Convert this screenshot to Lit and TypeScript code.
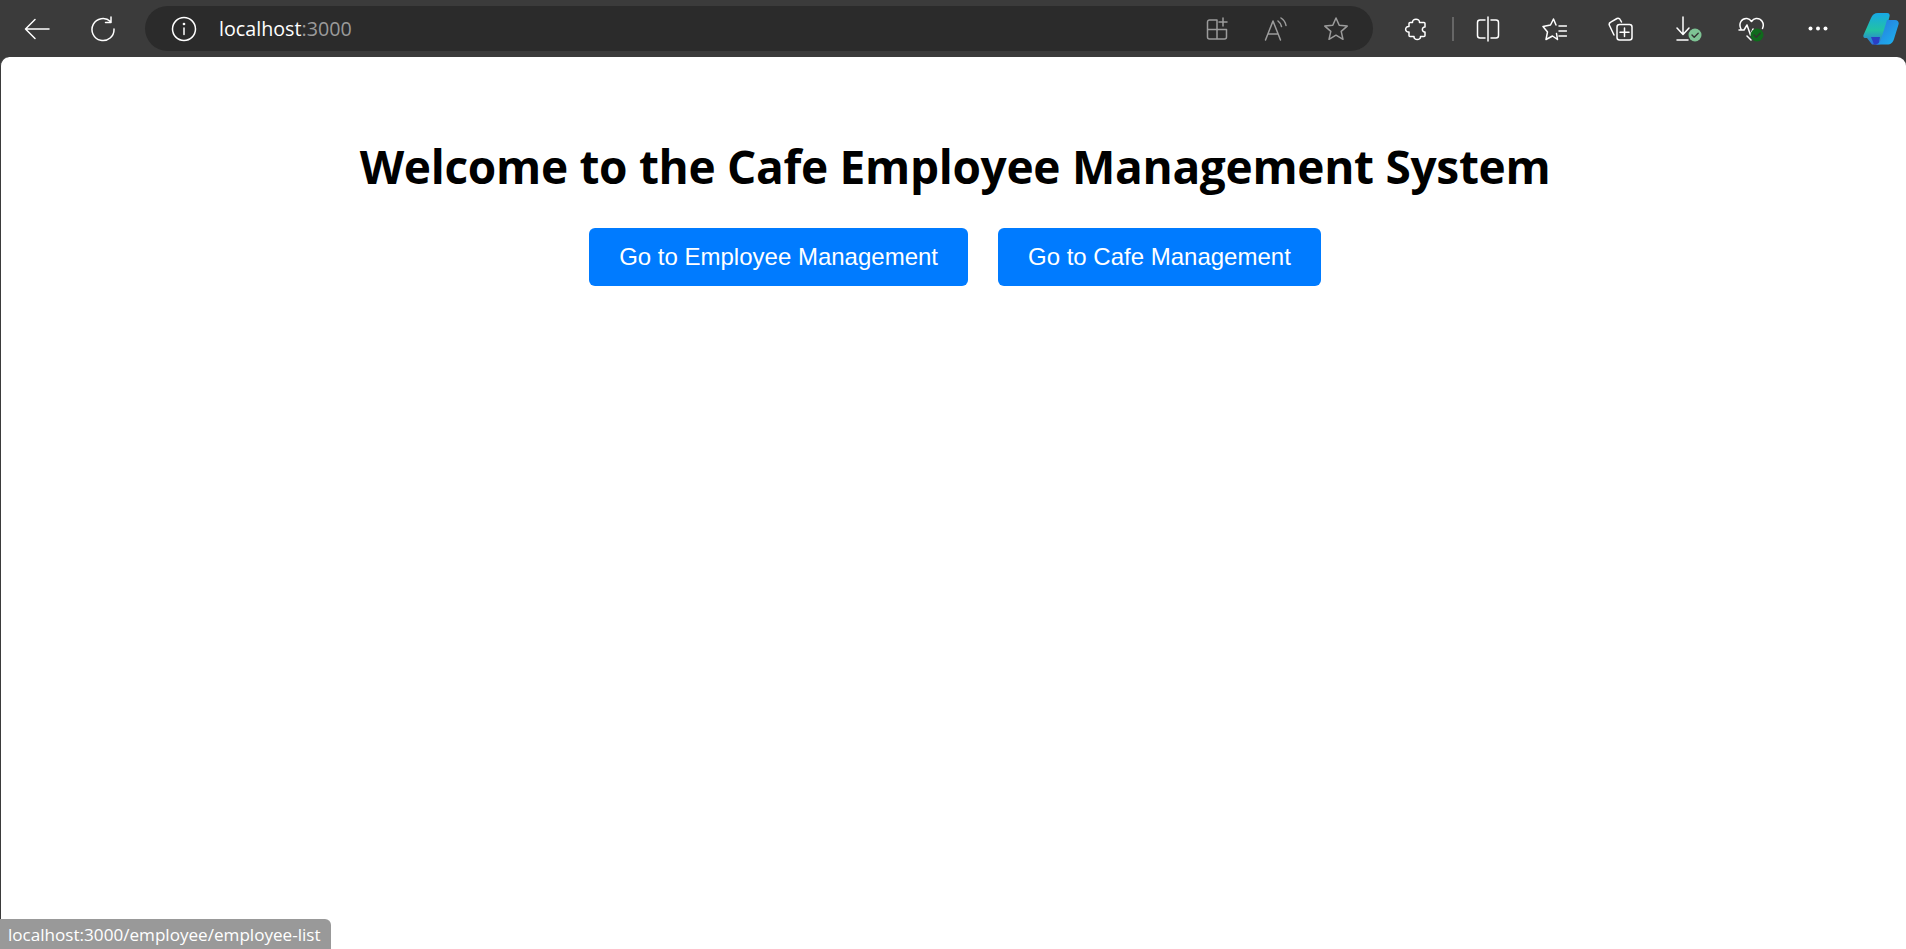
import { LitElement, html, css, svg } from 'lit';
import { customElement } from 'lit/decorators.js';

const icon = (w: number, h: number, body: unknown, cls = '') => html`
  <svg class=${cls} width=${w} height=${h} viewBox="0 0 ${w} ${h}" fill="none" stroke="currentColor" stroke-width="1.5" stroke-linecap="round" stroke-linejoin="round">${body}</svg>
`;

const badge = (fill: string) => svg`
  <circle cx="19" cy="19" r="6.500" fill=${fill} stroke="none" />
  <path d="M16 19l2.200 2.200 4-4" stroke="#333" stroke-width="1.400" />
`;

const back = icon(26, 24, svg`<path d="M25 12H2M11 2.500 1.500 12l9.500 9.500" />`);
const reload = icon(26, 26, svg`<path d="M20.500 5.500A11 11 0 1 0 24 13M21 1v5.500h-5.500" />`);
const info = icon(26, 26, svg`<circle cx="13" cy="13" r="11.500" /><path d="M13 12v6.500" /><circle cx="13" cy="8" r=".6" fill="currentColor" />`);
const tabAdd = icon(24, 24, svg`<path d="M12 3H4.500a2 2 0 0 0-2 2v15a2 2 0 0 0 2 2h15a2 2 0 0 0 2-2v-7.500h-19M12 3v19M18 1v8M14 5h8" />`);
const readAloud = icon(24, 24, svg`<path d="M1.500 23 9 4l7.500 19M4 17h10M14 4c2 1.500 3 3 3.500 5.500M17 1c3 2 4.500 4.500 5 7.500" />`);
const star = icon(26, 26, svg`<path d="M13 2l3.200 7.300 8 .8-6 5.300 1.800 7.900-7-4.100-7 4.100 1.800-7.900-6-5.300 8-.8z" />`);
const puzzle = icon(24, 24, svg`<path d="M8.500 5.500c-.5-4.500 7.500-4.500 7 0H20a1 1 0 0 1 1 1v3.500c-3.500-.5-3.500 5.500 0 5v3.500a1 1 0 0 1-1 1h-3.500c.5 4-7 4-6.500 0H6a1 1 0 0 1-1-1V15c-4.500.5-4.500-6 0-5.500V6.500a1 1 0 0 1 1-1z" />`);
const split = icon(24, 26, svg`<path d="M9 4H4a2.500 2.500 0 0 0-2.500 2.500v13A2.500 2.500 0 0 0 4 22h5M15 4h5a2.500 2.500 0 0 1 2.500 2.500v13A2.500 2.500 0 0 1 20 22h-5M12 1v24" />`);
const favorites = icon(25, 24, svg`<path d="M14 8 11.500 2 8.500 8 1 9.500 5.500 15 4 22.500l6.500-3.500 5 3.500-1-6M17 9h7.500M17 14h7.500M17 19h7.500" />`);
const collections = icon(25, 26, svg`<rect x="9" y="8.500" width="15" height="15.500" rx="2.500" /><path d="M6 19 1.500 9.500a2.500 2.500 0 0 1 1.200-3.300L9 2.500a2.500 2.500 0 0 1 3.300 1.300L13.500 6M16.500 12v8.500M12 16.300h9" />`);
const download = icon(26, 26, svg`<path d="M7 1v17M1 12l6 6.500 6-6.500M1 24h11" />${badge('#7ec394')}`);
const health = icon(28, 26, svg`<path d="M3 13C0 7 4 2 9 2.500c2 .2 3.500 1.500 4.500 3 1-1.500 2.500-2.800 4.500-3 5-.5 9 4.500 6.500 10M1 14h5l3-5 3.500 10 2.500-6M9 20l4 4" />${badge('#0f6a1c')}`);
const copilot = svg`
  <svg width="36" height="33" viewBox="0 0 36 33">
    <defs>
      <linearGradient id="cl" x1="0" y1="0" x2="0" y2="1"><stop offset="0" stop-color="#17a8e6" /><stop offset=".55" stop-color="#22c2a4" /><stop offset="1" stop-color="#2f6fe0" /></linearGradient>
      <linearGradient id="cr" x1="0" y1="0" x2="1" y2="1"><stop offset="0" stop-color="#2a72dc" /><stop offset="1" stop-color="#1bb6ee" /></linearGradient>
    </defs>
    <path d="M15 1h9c2.500 0 3 2 2.500 3.500L20 29c-.7 2.500-2 3.500-5 3.500H9L4 26H2C.500 26 0 24.500 .500 23L8 6c1.500-3.500 3.500-5 7-5z" fill="url(#cl)" />
    <path d="M8 25h9l-1.500 7.500H11z" fill="#2a3fc4" />
    <path d="M24 8h8c3 0 4.200 2 3.500 4.500L31 27c-1 3.500-3 5.500-7 5.500H11c4 0 6-2 7-5z" fill="url(#cr)" />
  </svg>
`;

@customElement('app-root')
export class AppRoot extends LitElement {
  static styles = css`
    :host {
      display: block;
      height: 949px;
      background: #3b3b3b;
      overflow: hidden;
      position: relative;
      font-family: 'Open Sans', 'Noto Sans', sans-serif;
    }
    .toolbar {
      display: flex;
      align-items: center;
      height: 57px;
      padding-left: 4px;
      color: #fff;
    }
    .cell {
      display: flex;
      align-items: center;
      justify-content: center;
      width: 66px;
      height: 57px;
      flex: none;
    }
    .address {
      display: flex;
      align-items: center;
      width: 1228px;
      height: 45px;
      margin-left: 9px;
      padding-left: 26px;
      box-sizing: border-box;
      background: #2b2b2b;
      border-radius: 23px;
      flex: none;
    }
    .url {
      margin-left: 22px;
      font-size: 19.700px;
      flex: 1;
    }
    .url span {
      color: #9a9a9a;
    }
    .address-icons {
      display: flex;
      align-items: center;
      gap: 35px;
      margin-right: 24px;
      color: #9c9c9c;
    }
    .tools {
      display: flex;
      align-items: center;
      margin-left: 10px;
    }
    .divider {
      width: 2px;
      height: 24px;
      margin: 0 1px 0 3px;
      background: #666;
      flex: none;
    }
    .wide {
      margin-left: 3px;
    }
    .tight {
      margin-left: -3px;
    }
    .page {
      height: 892px;
      background: #fff;
      border-left: 1px solid #3b3b3b;
      border-radius: 9px 9px 0 0;
      box-sizing: border-box;
      padding: 78px 0 0 3px;
      text-align: center;
    }
    h1 {
      margin: 0;
      font-size: 46px;
      letter-spacing: -0.300px;
      line-height: 62px;
      font-weight: 700;
      color: #000;
    }
    .actions {
      display: flex;
      justify-content: center;
      gap: 30px;
      margin-top: 31px;
    }
    button {
      height: 58px;
      padding: 0 30px;
      border: 0;
      border-radius: 6px;
      background: #007bff;
      color: #fff;
      font-family: 'Liberation Sans', Arial, sans-serif;
      font-size: 24px;
    }
    .status {
      position: absolute;
      left: 0;
      bottom: 0;
      height: 30px;
      padding: 0 10px 0 8px;
      display: flex;
      align-items: center;
      background: #999;
      color: #fff;
      border-top-right-radius: 6px;
      font-size: 17.100px;
    }
  `;

  render() {
    return html`
      <div class="toolbar">
        <div class="cell">${back}</div>
        <div class="cell">${reload}</div>
        <div class="address">
          ${info}
          <div class="url">localhost<span>:3000</span></div>
          <div class="address-icons">${tabAdd}${readAloud}${star}</div>
        </div>
        <div class="tools">
          <div class="cell">${puzzle}</div>
          <div class="divider"></div>
          <div class="cell">${split}</div>
          <div class="cell">${favorites}</div>
          <div class="cell">${collections}</div>
          <div class="cell wide">${download}</div>
          <div class="cell tight">${health}</div>
          <div class="cell">
            <svg width="20" height="5" viewBox="0 0 20 5" fill="#fff"><circle cx="2.500" cy="2.500" r="2" /><circle cx="10" cy="2.500" r="2" /><circle cx="17.500" cy="2.500" r="2" /></svg>
          </div>
          <div class="cell tight">${copilot}</div>
        </div>
      </div>
      <main class="page">
        <h1>Welcome to the Cafe Employee Management System</h1>
        <div class="actions">
          <button>Go to Employee Management</button>
          <button>Go to Cafe Management</button>
        </div>
      </main>
      <div class="status">localhost:3000/employee/employee-list</div>
    `;
  }
}
